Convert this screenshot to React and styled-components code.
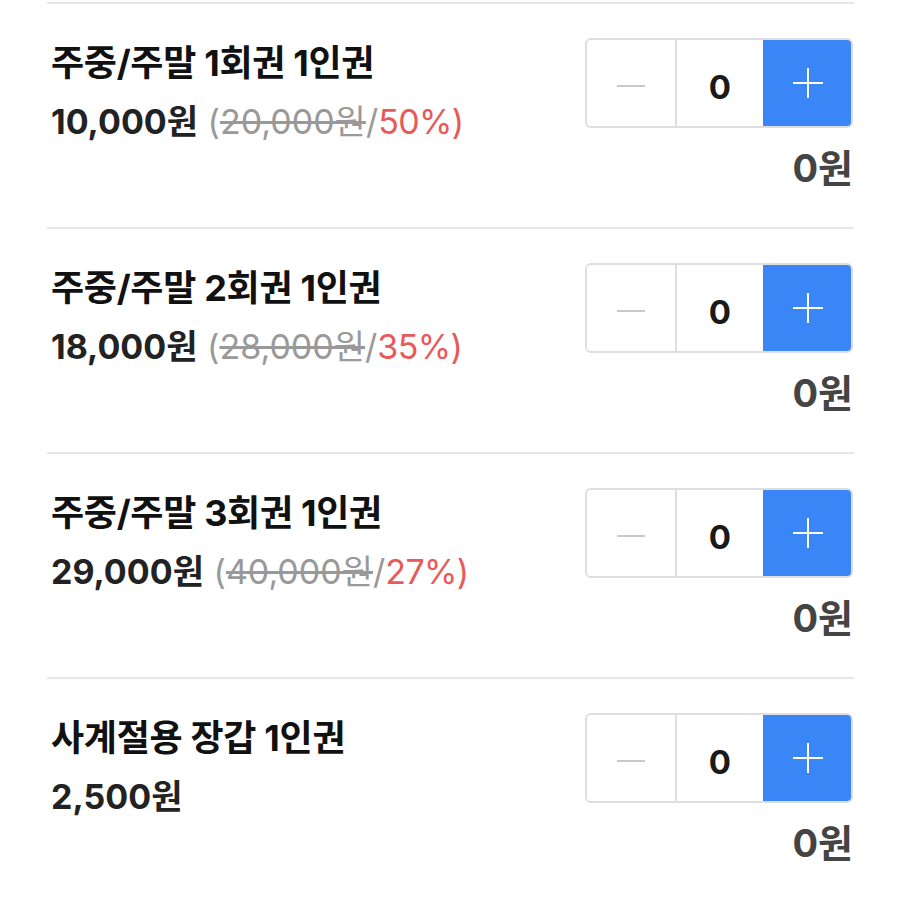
import React, { useState } from "react";
import styled, { createGlobalStyle } from "styled-components";

const GlobalStyle = createGlobalStyle`
	body {
		margin: 0;
		background: #fff;
		font-family: Inter, "Noto Sans CJK KR", "Noto Sans", sans-serif;
	}
`;

const List = styled.div`
	padding: 2px 46px 0 47px;
`;

const Row = styled.div`
	border-top: 2px solid #e6e6e8;
	height: 225px;
	padding: 34px 1px 0 4px;
	box-sizing: border-box;
	display: flex;
	justify-content: space-between;
	align-items: flex-start;
`;

const Info = styled.div`
	display: flex;
	flex-direction: column;
`;

const Title = styled.div`
	font-size: 36px;
	font-weight: 700;
	color: #111;
	line-height: 50px;
	letter-spacing: -0.3px;
`;

const PriceLine = styled.div`
	font-size: 34px;
	line-height: 50px;
	margin-top: 9px;
	color: #222;
`;

const Price = styled.span`
	font-weight: 700;
`;

const Origin = styled.span`
	color: #999;
`;

const Strike = styled.span`
	text-decoration: line-through;
`;

const Rate = styled.span`
	color: #e85a5a;
	letter-spacing: -0.6px;
`;

const Side = styled.div`
	display: flex;
	flex-direction: column;
	align-items: flex-end;
`;

const Stepper = styled.div`
	display: flex;
	height: 90px;
	border: 2px solid #dedede;
	border-radius: 6px;
	box-sizing: border-box;
	overflow: hidden;
`;

const StepButton = styled.button`
	width: ${(props) => (props.plus ? "90px" : "88px")};
	margin: ${(props) => (props.plus ? "-2px -2px -2px 0" : "0")};
	height: ${(props) => (props.plus ? "90px" : "86px")};
	border: none;
	padding: ${(props) => (props.plus ? "0" : "6px 0 0")};
	background: ${(props) => (props.plus ? "#3b86f6" : "#fff")};
	border-radius: ${(props) => (props.plus ? "0 6px 6px 0" : "0")};
	display: flex;
	align-items: center;
	justify-content: center;
	cursor: pointer;
`;

const Count = styled.div`
	width: 88px;
	border-left: 2px solid #dedede;
	padding-top: 7px;
	box-sizing: border-box;
	display: flex;
	align-items: center;
	justify-content: center;
	font-size: 33px;
	font-weight: 700;
	color: #1a1a1a;
`;

const Total = styled.div`
	font-size: 38px;
	font-weight: 700;
	color: #444;
	margin-top: 15px;
	line-height: 50px;
`;

const MinusIcon = () => (
	<svg width="28" height="4" viewBox="0 0 28 4">
		<rect x="0" y="1" width="28" height="2" fill="#c9c9c9" />
	</svg>
);

const PlusIcon = () => (
	<svg width="30" height="30" viewBox="0 0 30 30">
		<rect x="0" y="14" width="30" height="2" fill="#fff" />
		<rect x="14" y="0" width="2" height="30" fill="#fff" />
	</svg>
);

const tickets = [
	{ name: "주중/주말 1회권 1인권", price: 10000, origin: 20000, rate: 50 },
	{ name: "주중/주말 2회권 1인권", price: 18000, origin: 28000, rate: 35 },
	{ name: "주중/주말 3회권 1인권", price: 29000, origin: 40000, rate: 27 },
	{ name: "사계절용 장갑 1인권", price: 2500 },
];

const won = (n) => n.toLocaleString("en-US") + "원";

const TicketRow = ({ ticket }) => {
	const [qty, setQty] = useState(0);
	return (
		<Row>
			<Info>
				<Title>{ticket.name}</Title>
				<PriceLine>
					<Price>{won(ticket.price)}</Price>
					{ticket.origin && (
						<>
							{" "}
							<Origin>
								(<Strike>{won(ticket.origin)}</Strike>/
							</Origin>
							<Rate>{ticket.rate}%)</Rate>
						</>
					)}
				</PriceLine>
			</Info>
			<Side>
				<Stepper>
					<StepButton onClick={() => qty > 0 && setQty(qty - 1)}>
						<MinusIcon />
					</StepButton>
					<Count>{qty}</Count>
					<StepButton plus onClick={() => setQty(qty + 1)}>
						<PlusIcon />
					</StepButton>
				</Stepper>
				<Total>{won(qty * ticket.price)}</Total>
			</Side>
		</Row>
	);
};

const App = () => (
	<>
		<GlobalStyle />
		<List>
			{tickets.map((t) => (
				<TicketRow key={t.name} ticket={t} />
			))}
		</List>
	</>
);

export default App;
